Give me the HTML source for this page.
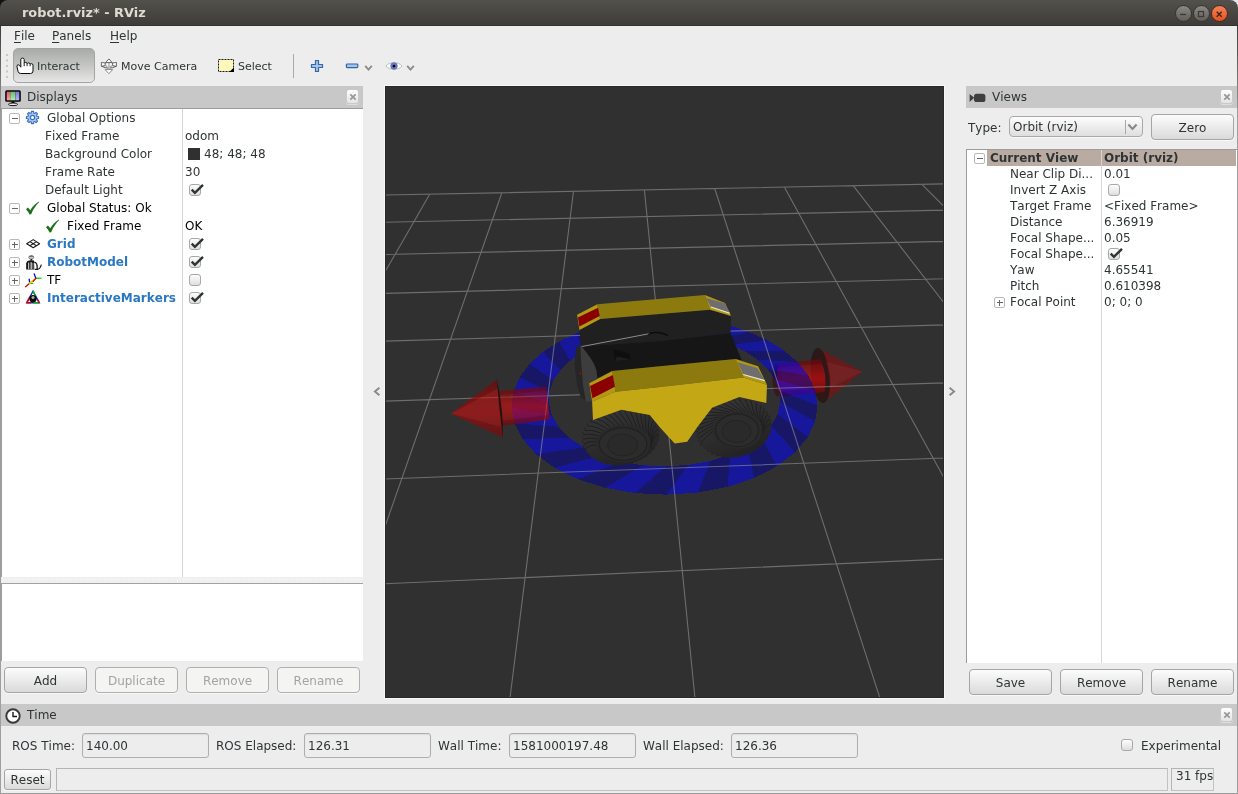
<!DOCTYPE html>
<html><head><meta charset="utf-8"><title>robot.rviz* - RViz</title>
<style>
*{box-sizing:border-box;margin:0;padding:0}
html,body{width:1238px;height:794px;overflow:hidden;background:#ededed}
body{position:relative;font-family:"DejaVu Sans","Liberation Sans",sans-serif;font-size:12px;color:#2e3436;line-height:14px;font-kerning:none}
.a{position:absolute;white-space:nowrap}
.t{position:absolute;white-space:nowrap;height:14px;line-height:14px}
.b{font-weight:bold}
.blue{color:#2a78c4;font-weight:bold}
.s11{font-size:11px}
#title{left:0;top:0;width:1238px;height:26px;background:linear-gradient(#52514c,#3d3c38);border-top-left-radius:8px;border-top-right-radius:8px;border-bottom:1px solid #32312e}
#titletxt{left:22px;top:5px;font-size:12.900px;font-kerning:normal;font-weight:bold;color:#dfdbd2;line-height:16px}
.wb{position:absolute;top:5.300px;width:16.500px;height:16.500px;border-radius:8.500px;border:1px solid #36352f;background:linear-gradient(#8a8983,#5f5e58)}
.wb.close{background:linear-gradient(#f38359,#e2531d);border-color:#4a2a1c}
.hdr{position:absolute;background:#c8c8c8;height:22px}
.hclose{position:absolute;width:13px;height:15px;border-radius:3px;border:1px solid #c9c9c9;background:linear-gradient(#fefefe,#e4e4e4);box-shadow:0 1px 0 #dedede}
.btn{position:absolute;height:26px;border:1px solid #a5a5a5;border-radius:4px;background:linear-gradient(#fcfcfc,#dadada);text-align:center;line-height:24px;padding-top:1px;color:#2e3436;box-shadow:0 1px 0 #f8f8f8}
.btn.dis{color:#a3a3a3;background:#f4f4f3;border-color:#adb0ad}
.field{position:absolute;height:25px;border:1px solid #aeaeae;border-radius:3px;background:#ededed;line-height:24px;padding-left:3px;box-shadow:inset 0 1px 1px #dcdcdc}
.cb{position:absolute;width:12px;height:12px;border:1px solid #a8a8a8;border-radius:3px;background:linear-gradient(#fdfdfd,#dedede)}
.exp{position:absolute;width:11px;height:11px;border:1px solid #bab9b3;border-radius:2px;background:#fff}
.exp:before{content:"";position:absolute;left:1.500px;top:4px;width:6px;height:1px;background:#666}
.exp.plus:after{content:"";position:absolute;left:4px;top:1.500px;width:1px;height:6px;background:#666}
svg{position:absolute;overflow:visible}
#root{position:absolute;left:0;top:0;width:1238px;height:794px;will-change:transform}
u{text-decoration:underline;text-underline-offset:2px;text-decoration-thickness:1px}
</style></head><body><div id="root">
<!-- TITLE BAR -->
<div class="a" style="left:0;top:0;width:10px;height:10px;background:#111"></div>
<div class="a" style="right:0;top:0;width:10px;height:10px;background:#e8e8e8"></div>
<div class="a" id="title"></div>
<div class="a" id="titletxt">robot.rviz* - RViz</div>
<div class="wb" style="left:1175.300px"></div>
<div class="wb" style="left:1193.200px"></div>
<div class="wb close" style="left:1211.200px"></div>
<svg style="left:1175.300px;top:5.600px" width="54" height="16">
<path d="M5 8.5h6" stroke="#3a3935" stroke-width="1.3" fill="none"/>
<rect x="23.5" y="5.5" width="5" height="5" stroke="#3a3935" stroke-width="1.2" fill="none"/>
<path d="M41.7 5.7l5 5M46.7 5.7l-5 5" stroke="#3a2218" stroke-width="1.3" fill="none"/>
</svg>
<!-- window borders -->
<div class="a" style="left:0;top:26px;width:1px;height:768px;background:linear-gradient(#3c3b37,#9e9e9e 90px,#9e9e9e);z-index:5"></div>
<div class="a" style="left:1237px;top:26px;width:1px;height:768px;background:linear-gradient(#3c3b37,#9e9e9e 90px,#9e9e9e);z-index:5"></div>
<div class="a" style="left:0;top:793px;width:1238px;height:1px;background:#9e9e9e;z-index:5"></div>
<!-- MENU -->
<div class="t" style="left:14px;top:29px"><u>F</u>ile</div>
<div class="t" style="left:52px;top:29px"><u>P</u>anels</div>
<div class="t" style="left:110px;top:29px"><u>H</u>elp</div>
<!--TOOLBAR-->
<svg style="left:6px;top:54px" width="3" height="25"><g fill="#c9c9bd"><rect x="0" y="0" width="2" height="2"/><rect x="0" y="5.5" width="2" height="2"/><rect x="0" y="11" width="2" height="2"/><rect x="0" y="16.5" width="2" height="2"/><rect x="0" y="22" width="2" height="2"/></g></svg>
<div class="a" style="left:13px;top:48px;width:82px;height:35px;border:1px solid #a3a5a2;border-radius:5px;background:linear-gradient(#a8aba7,#c4c6c3 50%,#e6e6e6)"></div>
<!-- hand icon -->
<svg style="left:16px;top:57px" width="18" height="18" viewBox="16 57 18 18">
<path d="M20.800 67.200V59.600Q20.800 58.100 22.500 58.100Q24.200 58.100 24.200 59.600V63.200Q24.300 62.400 25.600 62.400Q27 62.400 27.100 63.600Q27.300 62.900 28.600 62.900Q30 62.900 30.100 64.200Q30.300 63.700 31.500 63.700Q33 63.700 33 65.200V71Q33 73.500 30.500 73.500H20.700Q18.700 73.500 18.100 71.500L17 66.700Q16.700 64.800 18.200 64.800Q19.600 64.800 20.800 67.200z" fill="#fff" stroke="#000" stroke-width="0.950" stroke-linejoin="round"/>
<path d="M24.200 63.200V66.200M27.100 63.600V66.200M30.100 64.200V66.200" stroke="#000" stroke-width="0.900" fill="none"/>
</svg>
<div class="t s11" style="left:37px;top:60px">Interact</div>
<!-- move camera icon -->
<svg style="left:100px;top:58px" width="18" height="17" viewBox="100 58 18 17">
<path d="M101.500 66.200Q108.900 70.200 116.300 66.200" fill="none" stroke="#4a4a4a" stroke-width="0.900"/>
<ellipse cx="108.900" cy="64.400" rx="4.500" ry="2.100" fill="#f4f4f4" stroke="#555" stroke-width="0.800" stroke-dasharray="1.500 0.800"/>
<path d="M101.400 62.400L105.200 63V65.600L101.400 66.300z" fill="#fff" stroke="#4a4a4a" stroke-width="0.800" stroke-linejoin="round"/>
<path d="M116.400 62.400L112.600 63V65.600L116.400 66.300z" fill="#fff" stroke="#4a4a4a" stroke-width="0.800" stroke-linejoin="round"/>
<rect x="108.100" y="62.300" width="1.700" height="7.500" fill="#bdbdbd"/>
<path d="M108.900 58.900L112.200 62.600H105.600z" fill="#fff" stroke="#555" stroke-width="0.900" stroke-linejoin="round"/>
<path d="M108.900 73.700L112.700 69.600H105.100z" fill="#fff" stroke="#8a8a8a" stroke-width="1" stroke-linejoin="round"/>
</svg>
<div class="t s11" style="left:121px;top:60px">Move Camera</div>
<!-- select icon -->
<svg style="left:218px;top:59px" width="16" height="13" viewBox="0 0 16 13">
<rect x="0.5" y="0.5" width="15" height="12" fill="#fcf7bd" stroke="#000" stroke-width="0.900" stroke-dasharray="2 1"/>
<path d="M16 8.600V13H11.200z" fill="#000"/>
</svg>
<div class="t s11" style="left:238px;top:60px">Select</div>
<div class="a" style="left:293px;top:54px;width:1px;height:24px;background:#a9a9a9"></div>
<!-- plus / minus / eye -->
<svg style="left:310px;top:59px" width="14" height="14" viewBox="0 0 14 14">
<path d="M5.500 1.500h3v4h4v3h-4v4h-3v-4h-4v-3h4z" fill="#a5c4ea" stroke="#3465a4" stroke-width="1.200" stroke-linejoin="round"/></svg>
<svg style="left:345px;top:63px" width="14" height="6" viewBox="0 0 14 6">
<rect x="1.400" y="1" width="11.400" height="3.600" rx="0.800" fill="#a5c4ea" stroke="#3465a4" stroke-width="1.200"/></svg>
<svg style="left:364px;top:64px" width="9" height="8" viewBox="0 0 9 8"><path d="M1.200 1.800L4.500 5.600 7.800 1.800" fill="none" stroke="#8a8c87" stroke-width="1.800"/></svg>
<svg style="left:385px;top:60px" width="18" height="12" viewBox="0 0 18 12">
<path d="M1 6C4 1.600 14 1.600 17 6C14 10.400 4 10.400 1 6z" fill="#fff" stroke="#b9b9b9" stroke-width="1"/>
<circle cx="9" cy="6" r="3.300" fill="#6f86d0" stroke="#4a5fae" stroke-width="0.700"/>
<circle cx="9" cy="6" r="1.500" fill="#000"/>
</svg>
<svg style="left:406px;top:64px" width="9" height="8" viewBox="0 0 9 8"><path d="M1.200 1.800L4.500 5.600 7.800 1.800" fill="none" stroke="#8a8c87" stroke-width="1.800"/></svg>
<!--DISPLAYS-->
<div class="hdr" style="left:1px;top:86px;width:362px"></div>
<svg style="left:5px;top:90px" width="16" height="16" viewBox="0 0 16 16">
<defs><linearGradient id="mr" x1="0" y1="0" x2="0" y2="1"><stop offset="0" stop-color="#c06a6a"/><stop offset="1" stop-color="#f5a3a3"/></linearGradient>
<linearGradient id="mg" x1="0" y1="0" x2="0" y2="1"><stop offset="0" stop-color="#6cbc6c"/><stop offset="1" stop-color="#a5f5a5"/></linearGradient>
<linearGradient id="mb" x1="0" y1="0" x2="0" y2="1"><stop offset="0" stop-color="#7c7cd0"/><stop offset="1" stop-color="#b3b3ff"/></linearGradient></defs>
<rect x="0.200" y="0.200" width="15.600" height="11.600" rx="1.500" fill="#000"/>
<rect x="1.700" y="1.700" width="4.200" height="8.600" fill="url(#mr)"/><rect x="5.900" y="1.700" width="4.500" height="8.600" fill="url(#mg)"/><rect x="10.400" y="1.700" width="3.900" height="8.600" fill="url(#mb)"/>
<path d="M6.800 11.500h2.400l.5 1.800h-3.400z" fill="#000"/>
<ellipse cx="8" cy="14.300" rx="4.600" ry="1.300" fill="#f4f4f4" stroke="#000" stroke-width="0.9"/>
</svg>
<div class="t" style="left:27px;top:90px">Displays</div>
<div class="hclose" style="left:346px;top:89px"></div>
<svg style="left:349px;top:93px" width="8" height="8" viewBox="0 0 8 8"><path d="M1.300 1.300l5.400 5.400M6.700 1.300l-5.400 5.400" stroke="#979797" stroke-width="1.700" fill="none"/></svg>
<div class="a" style="left:0;top:108px;width:363px;height:469px;background:#fff;border-left:2px solid #9e9e9e;border-top:1px solid #9c9c9c"></div>
<div class="a" style="left:182px;top:109px;width:1px;height:468px;background:#d4d4d4"></div>
<div class="exp" style="left:9px;top:113px"></div>
<svg style="left:25px;top:110px" width="15" height="15" viewBox="0 0 15 15"><path d="M6.45 1.39L8.55 1.39L8.73 3.07L9.77 3.50L11.08 2.44L12.56 3.92L11.50 5.23L11.93 6.27L13.61 6.45L13.61 8.55L11.93 8.73L11.50 9.77L12.56 11.08L11.08 12.56L9.77 11.50L8.73 11.93L8.55 13.61L6.45 13.61L6.27 11.93L5.23 11.50L3.92 12.56L2.44 11.08L3.50 9.77L3.07 8.73L1.39 8.55L1.39 6.45L3.07 6.27L3.50 5.23L2.44 3.92L3.92 2.44L5.23 3.50L6.27 3.07z" fill="#a9c6ec" stroke="#3a6fbf" stroke-width="1.100" stroke-linejoin="round"/><circle cx="7.500" cy="7.500" r="2.100" fill="#fff" stroke="#3a6fbf" stroke-width="1.200"/></svg>
<div class="t " style="left:47px;top:111px">Global Options</div>
<div class="t " style="left:45px;top:129px">Fixed Frame</div>
<div class="t " style="left:185px;top:129px">odom</div>
<div class="t " style="left:45px;top:147px">Background Color</div>
<div class="a" style="left:188px;top:148px;width:12px;height:12px;background:#303030"></div>
<div class="t " style="left:204px;top:147px">48; 48; 48</div>
<div class="t " style="left:45px;top:165px">Frame Rate</div>
<div class="t " style="left:185px;top:165px">30</div>
<div class="t " style="left:45px;top:183px">Default Light</div>
<div class="cb" style="left:189px;top:184px"></div>
<svg style="left:189px;top:183px" width="16" height="14" viewBox="0 0 16 14"><path d="M2.700 6.700L5.900 9.900 14 1.800" fill="none" stroke="#2e3436" stroke-width="2.400"/></svg>
<div class="exp" style="left:9px;top:203px"></div>
<svg style="left:25px;top:201px" width="15" height="14" viewBox="0 0 15 14"><path d="M1 8.200L2.900 6.400 5.300 9.300C7.500 5.600 10.500 2.500 13.800 0.600L14.200 1.100C11 4.200 8.200 8.300 6.200 13.200L4.600 13.400C3.700 11.500 2.500 9.700 1 8.200z" fill="#1c701c"/></svg>
<div class="t " style="left:47px;top:201px;color:#000">Global Status: Ok</div>
<svg style="left:45px;top:219px" width="15" height="14" viewBox="0 0 15 14"><path d="M1 8.200L2.900 6.400 5.300 9.300C7.500 5.600 10.500 2.500 13.800 0.600L14.200 1.100C11 4.200 8.200 8.300 6.200 13.200L4.600 13.400C3.700 11.500 2.500 9.700 1 8.200z" fill="#1c701c"/></svg>
<div class="t " style="left:67px;top:219px;color:#000">Fixed Frame</div>
<div class="t " style="left:185px;top:219px;color:#000">OK</div>
<div class="exp plus" style="left:9px;top:239px"></div>
<svg style="left:26px;top:239px" width="15" height="10" viewBox="0 0 15 10"><path d="M7.200 0.600L13.600 4.700 7.200 8.800 0.700 4.700zM3.950 2.650L10.400 6.750M10.400 2.650L3.950 6.750" fill="#fff" stroke="#1a1a1a" stroke-width="1.100" stroke-linejoin="round"/></svg>
<div class="t blue" style="left:47px;top:237px">Grid</div>
<div class="cb" style="left:189px;top:238px"></div>
<svg style="left:189px;top:237px" width="16" height="14" viewBox="0 0 16 14"><path d="M2.700 6.700L5.900 9.900 14 1.800" fill="none" stroke="#2e3436" stroke-width="2.400"/></svg>
<div class="exp plus" style="left:9px;top:257px"></div>
<svg style="left:25px;top:255px" width="17" height="16" viewBox="0 0 17 16">
<ellipse cx="6.300" cy="2.300" rx="2.500" ry="1.700" fill="#f0f0f0" stroke="#222" stroke-width="0.600"/><path d="M3.900 1.700Q6.300 -0.300 8.700 1.700z" fill="#2d4fa8"/><rect x="4.300" y="2.400" width="4" height="0.800" fill="#c9b458"/>
<rect x="5.500" y="4" width="1.700" height="1.500" fill="#1a1a1a"/>
<path d="M2.200 6.200Q5 4.800 9 5.600L9.300 14.600H1.200V8.200z" fill="#151515"/>
<rect x="3.200" y="7.600" width="1" height="6.500" fill="#e8e8e8"/><rect x="5.600" y="7.200" width="1.100" height="6.900" fill="#f4f4f4"/><rect x="7.600" y="7.800" width="0.700" height="6" fill="#bbb"/>
<path d="M9.200 7.200c2.600 0.100 3.200 2.600 3 7.200h-2.400" fill="none" stroke="#151515" stroke-width="1.300"/>
<path d="M12.200 14.200c2 0.400 3.200-1.600 4.200-4.600" fill="none" stroke="#151515" stroke-width="1.200"/>
</svg>
<div class="t blue" style="left:47px;top:255px">RobotModel</div>
<div class="cb" style="left:189px;top:256px"></div>
<svg style="left:189px;top:255px" width="16" height="14" viewBox="0 0 16 14"><path d="M2.700 6.700L5.900 9.900 14 1.800" fill="none" stroke="#2e3436" stroke-width="2.400"/></svg>
<div class="exp plus" style="left:9px;top:275px"></div>
<svg style="left:25px;top:273px" width="17" height="15" viewBox="0 0 17 15" fill="none" stroke-width="1.300" stroke-linecap="round">
<path d="M4.700 10.200L0.600 13.700" stroke="#e00000"/><path d="M4.700 10.200L4.200 6.200" stroke="#0000e0"/><path d="M4.700 10.200L7.700 10.300" stroke="#00c800"/>
<path d="M4.700 10.200L10.800 5.300" stroke="#e8d000" stroke-width="1.500"/>
<path d="M10.800 5.300L9.200 0.900" stroke="#0000e0"/><path d="M10.800 5.300L16 5.200" stroke="#00d000"/><path d="M10.800 5.300L8.200 8.400" stroke="#e00000"/>
</svg>
<div class="t " style="left:47px;top:273px;color:#000">TF</div>
<div class="cb" style="left:189px;top:274px"></div>
<div class="exp plus" style="left:9px;top:293px"></div>
<svg style="left:25px;top:290px" width="16" height="15" viewBox="0 0 16 15">
<path d="M8 1.200L14.300 12.800H1.700z" fill="none" stroke="#2020e0" stroke-width="1.400"/>
<path d="M8 1.200L11.200 7" stroke="#00c000" stroke-width="1.400"/><path d="M1.700 12.800L4.800 7" stroke="#e00000" stroke-width="1.400"/><path d="M14.300 12.800H8" stroke="#00c000" stroke-width="1.400"/><path d="M1.700 12.800H6" stroke="#e00000" stroke-width="1.400"/><path d="M14.300 12.800L12.500 9.500" stroke="#e00000" stroke-width="1.400"/>
<circle cx="8" cy="8.800" r="3.700" fill="#0c0c0c"/><circle cx="8" cy="7.400" r="1.500" fill="#a8a8a8"/>
</svg>
<div class="t blue" style="left:47px;top:291px">InteractiveMarkers</div>
<div class="cb" style="left:189px;top:292px"></div>
<svg style="left:189px;top:291px" width="16" height="14" viewBox="0 0 16 14"><path d="M2.700 6.700L5.900 9.900 14 1.800" fill="none" stroke="#2e3436" stroke-width="2.400"/></svg>
<div class="a" style="left:1px;top:577px;width:362px;height:6px;background:#ededed"></div>
<svg style="left:1px;top:577px" width="362" height="6"><defs><pattern id="dots" width="6" height="6" patternUnits="userSpaceOnUse"><path d="M0.500 1h1v1h-1zM1.500 2h1v1h-1zM2.500 3h1v1h-1zM3.500 1h1v1h-1zM4.500 2h1v1h-1zM5.500 3h1v1h-1zM1.500 4.500h1v1h-1zM4.500 4.500h1v1h-1z" fill="#fbfbfb"/></pattern></defs><rect width="362" height="6" fill="url(#dots)"/></svg>
<div class="a" style="left:0;top:583px;width:363px;height:78px;background:#fff;border-left:2px solid #9e9e9e;border-top:1px solid #a2a2a2"></div>
<div class="btn" style="left:4px;top:667px;width:83px">Add</div>
<div class="btn dis" style="left:95px;top:667px;width:83px">Duplicate</div>
<div class="btn dis" style="left:186px;top:667px;width:83px">Remove</div>
<div class="btn dis" style="left:277px;top:667px;width:83px">Rename</div>
<!--VIEWPORT-->
<svg style="left:373px;top:386px" width="8" height="11" viewBox="0 0 8 11"><path d="M6.400 1.700L1.900 5.500 6.400 9.300" fill="none" stroke="#888a85" stroke-width="1.900"/></svg>
<svg style="left:947.800px;top:386px" width="8" height="11" viewBox="0 0 8 11"><path d="M1.600 1.700L6.100 5.500 1.600 9.300" fill="none" stroke="#888a85" stroke-width="1.900"/></svg>
<div class="a" style="left:384px;top:85px;width:561px;height:614px;border:1px solid #f7f7f7"></div>
<svg style="left:385px;top:86px;overflow:hidden" width="559" height="612" viewBox="385 86 559 612">
<rect x="385" y="86" width="559" height="612" fill="#303030"/>
<defs>
<linearGradient id="sh" x1="0" y1="0" x2="0" y2="1"><stop offset="0" stop-color="#8e0808"/><stop offset="0.18" stop-color="#a80a0a"/><stop offset="0.5" stop-color="#ee0a0a"/><stop offset="0.8" stop-color="#c00a0a"/><stop offset="1" stop-color="#8e0808"/></linearGradient>
<linearGradient id="cn" x1="0" y1="0" x2="0" y2="1"><stop offset="0" stop-color="#980808"/><stop offset="0.3" stop-color="#d80c0c"/><stop offset="0.6" stop-color="#e00c0c"/><stop offset="1" stop-color="#a80808"/></linearGradient>
</defs>

<g>
<ellipse cx="777.100" cy="380.300" rx="4.800" ry="16.200" transform="rotate(-3 777.1 380.3)" fill="#3a0c0c" fill-opacity="0.6"/>
<ellipse cx="820.400" cy="375.500" rx="9.600" ry="27.600" transform="rotate(-6 820.4 375.5)" fill="#2c0a0a" fill-opacity="0.62"/>
<polygon points="862.5,371.5 822.9,350.6 826.0,360.0 829.5,376.0 829.8,390.0 828.0,399.8" fill="#d01010" fill-opacity="0.42"/>
<polygon points="862.5,371.5 822.9,350.6 826.5,362.0" fill="#300000" fill-opacity="0.2"/>
<polygon points="862.5,371.5 828.0,399.8 829.8,388.0" fill="#300000" fill-opacity="0.18"/>
<path d="M778.100 363.700L820.400 359.200Q828 375 824.400 391.900L780.100 396.400Q775.500 380 778.100 363.700z" fill="url(#sh)" fill-opacity="0.56"/>
<polygon points="778.1,363.7 820.4,359.2 822.0,363.5 777.8,368.0" fill="#400000" fill-opacity="0.25"/>
<polygon points="779.3,392.0 825.2,387.2 824.4,391.9 780.1,396.4" fill="#400000" fill-opacity="0.22"/>
</g>

<g shape-rendering="crispEdges"><path d="M663.4 332.7L681.2 333.4L707.8 320.7L685.7 317.9zM698.6 335.7L715.3 339.5L749.3 332.0L729.2 325.4zM730.9 344.8L745.1 351.5L784.2 350.5L767.8 340.4zM757.4 359.6L767.5 368.9L808.4 375.6L797.9 362.4zM774.9 379.2L779.3 390.4L817.6 405.6L815.1 390.1zM780.3 402.0L777.7 413.9L807.8 437.2L815.2 421.4zM771.3 425.5L761.1 436.5L777.0 466.2L795.0 452.4zM747.3 446.3L730.2 454.6L727.5 486.9L754.3 477.9zM710.4 460.9L688.7 464.9L666.4 494.7L697.7 492.6zM665.9 466.4L643.0 465.3L605.0 487.8L635.0 493.1zM621.1 461.5L601.0 455.5L554.5 467.7L577.8 479.1zM583.6 447.4L569.3 437.7L522.5 439.1L535.9 454.1zM558.7 426.8L551.9 415.3L511.4 407.4L514.4 423.3zM548.8 403.4L549.4 391.7L519.6 377.3L513.3 392.0zM553.4 380.5L560.5 370.1L543.0 351.9L529.6 363.9zM570.3 360.7L582.3 352.4L577.4 332.9L559.1 341.5zM596.3 345.5L611.8 340.0L618.6 321.2L597.4 326.1zM628.4 336.1L645.7 333.6L663.1 317.1L640.7 318.2z" fill="#0000ff" fill-opacity="0.52"/><path d="M645.7 333.6L663.4 332.7L685.7 317.9L663.1 317.1zM681.2 333.4L698.6 335.7L729.2 325.4L707.8 320.7zM715.3 339.5L730.9 344.8L767.8 340.4L749.3 332.0zM745.1 351.5L757.4 359.6L797.9 362.4L784.2 350.5zM767.5 368.9L774.9 379.2L815.1 390.1L808.4 375.6zM779.3 390.4L780.3 402.0L815.2 421.4L817.6 405.6zM777.7 413.9L771.3 425.5L795.0 452.4L807.8 437.2zM761.1 436.5L747.3 446.3L754.3 477.9L777.0 466.2zM730.2 454.6L710.4 460.9L697.7 492.6L727.5 486.9zM688.7 464.9L665.9 466.4L635.0 493.1L666.4 494.7zM643.0 465.3L621.1 461.5L577.8 479.1L605.0 487.8zM601.0 455.5L583.6 447.4L535.9 454.1L554.5 467.7zM569.3 437.7L558.7 426.8L514.4 423.3L522.5 439.1zM551.9 415.3L548.8 403.4L513.3 392.0L511.4 407.4zM549.4 391.7L553.4 380.5L529.6 363.9L519.6 377.3zM560.5 370.1L570.3 360.7L559.1 341.5L543.0 351.9zM582.3 352.4L596.3 345.5L597.4 326.1L577.4 332.9zM611.8 340.0L628.4 336.1L640.7 318.2L618.6 321.2z" fill="#000096" fill-opacity="0.52"/></g>

<path d="M-1035.6 1484.4L283.3 197.1M-1035.6 1484.4L2216.3 1185.5M-645.1 1448.5L356.8 195.6M-564.6 1024.7L1822.4 863.6M-271.7 1414.2L429.7 194.2M-302.9 769.2L1583.9 668.7M85.8 1381.3L501.9 192.7M-136.4 606.7L1424.0 538.0M428.3 1349.8L573.5 191.3M-21.1 494.2L1309.3 444.2M756.8 1319.6L644.4 189.9M63.5 411.7L1223.0 373.7M1072.1 1290.6L714.7 188.5M128.1 348.5L1155.8 318.8M1375.0 1262.8L784.3 187.1M179.2 298.7L1101.9 274.7M1666.3 1236.0L853.4 185.8M220.5 258.4L1057.7 238.7M1946.5 1210.3L921.9 184.4M254.6 225.1L1020.9 208.5M2216.3 1185.5L989.7 183.0M283.3 197.1L989.7 183.0" stroke="#a0a0a4" stroke-opacity="0.55" stroke-width="1.100" fill="none"/>
<g>
<polygon points="576.0,348.0 581.0,344.0 584.0,360.0 585.0,400.0 581.0,398.0 577.0,385.0 574.5,365.0" fill="#262626" />
<polygon points="579.5,330.0 600.1,319.1 710.1,309.8 731.1,315.9 730.5,333.2 660.0,340.9 581.2,346.6" fill="#202020" />
<polygon points="581.2,346.6 660.0,340.9 730.5,333.2 741.8,360.2 735.9,359.0 660.0,366.3 612.3,371.1 597.3,378.0 584.0,352.0" fill="#161616" />
<polygon points="613.5,348.9 629.6,353.7 630.4,359.4 615.1,361.0" fill="#0f0f0f" />
<polygon points="615.1,361.0 630.4,359.4 617.0,356.5" fill="#1f1f1f" />
<path d="M581.5 346.600L649.800 333.600" stroke="#8c8c8c" stroke-width="1" fill="none"/>
<path d="M648 334.500C653 331.500 660 331.800 668 335.500" stroke="#0a0a0a" stroke-width="1.200" fill="none"/>
<path d="M580.300 344.800L584.400 349.700C590 357 595 364 596.500 370.700L597.300 378 589.200 383.200 592.100 401.400 586 401.400 583 385 581 360z" fill="#3d3d3d"/>
<circle cx="580.300" cy="373.500" r="0.900" fill="#c00000"/>
<polygon points="597.3,304.2 704.8,295.1 710.1,309.8 600.1,319.1" fill="#8c7a0f" />
<polygon points="577.1,314.7 597.3,304.2 600.1,319.1 579.5,330.0" fill="#b39812" />
<polygon points="577.9,317.5 598.0,307.8 599.7,315.9 579.4,326.6" fill="#8a0000" />
<polygon points="704.8,295.1 725.0,302.9 731.1,315.9 710.1,309.8" fill="#b39812" />
<polygon points="706.0,298.1 724.6,303.3 729.9,312.6 710.9,307.0" fill="#6e6e6e" />
<path d="M710.900 307L729.700 313.200" stroke="#e6e6e6" stroke-width="1.100" fill="none"/>
<g>
<linearGradient id="wg1" x1="0.3" y1="0" x2="0.600" y2="1"><stop offset="0" stop-color="#353535"/><stop offset="0.55" stop-color="#2c2c2c"/><stop offset="1" stop-color="#222"/></linearGradient>
<ellipse cx="620.8" cy="436.5" rx="38.5" ry="28.5" transform="rotate(-8.0 620.8 436.5)" fill="url(#wg1)"/>
<circle cx="658.9" cy="431.1" r="0.900" fill="#262626"/>
<circle cx="659.1" cy="435.6" r="0.900" fill="#262626"/>
<circle cx="658.3" cy="440.1" r="0.900" fill="#262626"/>
<circle cx="656.6" cy="444.5" r="0.900" fill="#262626"/>
<circle cx="654.0" cy="448.8" r="0.900" fill="#262626"/>
<circle cx="650.6" cy="452.7" r="0.900" fill="#262626"/>
<circle cx="646.4" cy="456.2" r="0.900" fill="#262626"/>
<circle cx="641.6" cy="459.2" r="0.900" fill="#262626"/>
<circle cx="636.4" cy="461.7" r="0.900" fill="#262626"/>
<circle cx="630.7" cy="463.5" r="0.900" fill="#262626"/>
<circle cx="624.8" cy="464.7" r="0.900" fill="#262626"/>
<circle cx="618.8" cy="465.2" r="0.900" fill="#262626"/>
<circle cx="612.8" cy="465.0" r="0.900" fill="#262626"/>
<circle cx="607.0" cy="464.1" r="0.900" fill="#262626"/>
<circle cx="601.6" cy="462.5" r="0.900" fill="#262626"/>
<circle cx="596.6" cy="460.2" r="0.900" fill="#262626"/>
<circle cx="592.3" cy="457.4" r="0.900" fill="#262626"/>
<circle cx="588.6" cy="454.1" r="0.900" fill="#262626"/>
<circle cx="585.8" cy="450.3" r="0.900" fill="#262626"/>
<circle cx="583.8" cy="446.2" r="0.900" fill="#262626"/>
<circle cx="582.7" cy="441.9" r="0.900" fill="#262626"/>
<circle cx="582.5" cy="437.4" r="0.900" fill="#262626"/>
<circle cx="583.3" cy="432.9" r="0.900" fill="#262626"/>
<circle cx="585.0" cy="428.5" r="0.900" fill="#262626"/>
<circle cx="587.6" cy="424.2" r="0.900" fill="#262626"/>
<circle cx="591.0" cy="420.3" r="0.900" fill="#262626"/>
<circle cx="595.2" cy="416.8" r="0.900" fill="#262626"/>
<circle cx="600.0" cy="413.8" r="0.900" fill="#262626"/>
<circle cx="605.2" cy="411.3" r="0.900" fill="#262626"/>
<circle cx="610.9" cy="409.5" r="0.900" fill="#262626"/>
<circle cx="616.8" cy="408.3" r="0.900" fill="#262626"/>
<circle cx="622.8" cy="407.8" r="0.900" fill="#262626"/>
<circle cx="628.8" cy="408.0" r="0.900" fill="#262626"/>
<circle cx="634.6" cy="408.9" r="0.900" fill="#262626"/>
<circle cx="640.0" cy="410.5" r="0.900" fill="#262626"/>
<circle cx="645.0" cy="412.8" r="0.900" fill="#262626"/>
<circle cx="649.3" cy="415.6" r="0.900" fill="#262626"/>
<circle cx="653.0" cy="418.9" r="0.900" fill="#262626"/>
<circle cx="655.8" cy="422.7" r="0.900" fill="#262626"/>
<circle cx="657.8" cy="426.8" r="0.900" fill="#262626"/>
<ellipse cx="623.5" cy="443.5" rx="27.3" ry="18.8" fill="#2a2a2a"/>
<path d="M585.4 448.9Q589.7 444.8 596.3 445.0M583.6 444.5Q588.8 440.9 596.3 441.9M582.9 439.8Q588.7 436.9 597.0 438.9M583.2 435.1Q589.5 432.9 598.5 435.9M584.5 430.5Q591.1 429.1 600.7 433.2M586.9 426.0Q593.6 425.4 603.5 430.7M590.1 421.7Q596.8 422.0 606.8 428.6M594.2 417.9Q600.7 419.0 610.6 426.9M599.1 414.6Q605.1 416.5 614.8 425.7M604.5 411.9Q609.9 414.5 619.1 424.9M610.4 409.9Q615.1 413.2 623.6 424.7M616.5 408.6Q620.4 412.5 628.2 425.0M622.8 408.1Q625.7 412.4 632.5 425.8M629.1 408.3Q630.9 413.0 636.7 427.0M635.1 409.3Q635.8 414.3 640.4 428.7M640.7 411.1Q640.3 416.1 643.7 430.9M645.7 413.6Q644.3 418.6 646.5 433.3M650.1 416.7Q647.6 421.5 648.6 436.1M653.7 420.3Q650.2 424.8 650.0 439.1M656.4 424.4Q651.9 428.4 650.7 442.1M658.1 428.8Q652.9 432.3 650.7 445.2M658.7 433.4Q652.9 436.3 649.9 448.3" stroke="#1d1d1d" stroke-width="0.900" fill="none"/>
<ellipse cx="623.0" cy="444.0" rx="23.8" ry="16.3" fill="#2c2c2c" stroke="#212121" stroke-width="1.200"/>
<ellipse cx="622.6" cy="445.0" rx="15.0" ry="11.0" fill="#2a2a2a" stroke="#232323" stroke-width="0.900"/>
</g>
<g>
<linearGradient id="wg2" x1="0.3" y1="0" x2="0.600" y2="1"><stop offset="0" stop-color="#353535"/><stop offset="0.55" stop-color="#2c2c2c"/><stop offset="1" stop-color="#222"/></linearGradient>
<ellipse cx="734.0" cy="428.5" rx="37.5" ry="28.5" transform="rotate(-12.0 734.0 428.5)" fill="url(#wg2)"/>
<circle cx="770.7" cy="420.7" r="0.900" fill="#262626"/>
<circle cx="771.2" cy="425.2" r="0.900" fill="#262626"/>
<circle cx="770.7" cy="429.7" r="0.900" fill="#262626"/>
<circle cx="769.4" cy="434.2" r="0.900" fill="#262626"/>
<circle cx="767.2" cy="438.6" r="0.900" fill="#262626"/>
<circle cx="764.1" cy="442.7" r="0.900" fill="#262626"/>
<circle cx="760.4" cy="446.5" r="0.900" fill="#262626"/>
<circle cx="755.9" cy="449.8" r="0.900" fill="#262626"/>
<circle cx="751.0" cy="452.6" r="0.900" fill="#262626"/>
<circle cx="745.6" cy="454.8" r="0.900" fill="#262626"/>
<circle cx="739.9" cy="456.4" r="0.900" fill="#262626"/>
<circle cx="734.1" cy="457.3" r="0.900" fill="#262626"/>
<circle cx="728.3" cy="457.4" r="0.900" fill="#262626"/>
<circle cx="722.6" cy="456.9" r="0.900" fill="#262626"/>
<circle cx="717.2" cy="455.6" r="0.900" fill="#262626"/>
<circle cx="712.3" cy="453.7" r="0.900" fill="#262626"/>
<circle cx="707.8" cy="451.2" r="0.900" fill="#262626"/>
<circle cx="704.0" cy="448.1" r="0.900" fill="#262626"/>
<circle cx="700.9" cy="444.5" r="0.900" fill="#262626"/>
<circle cx="698.7" cy="440.6" r="0.900" fill="#262626"/>
<circle cx="697.3" cy="436.3" r="0.900" fill="#262626"/>
<circle cx="696.8" cy="431.8" r="0.900" fill="#262626"/>
<circle cx="697.3" cy="427.3" r="0.900" fill="#262626"/>
<circle cx="698.6" cy="422.8" r="0.900" fill="#262626"/>
<circle cx="700.8" cy="418.4" r="0.900" fill="#262626"/>
<circle cx="703.9" cy="414.3" r="0.900" fill="#262626"/>
<circle cx="707.6" cy="410.5" r="0.900" fill="#262626"/>
<circle cx="712.1" cy="407.2" r="0.900" fill="#262626"/>
<circle cx="717.0" cy="404.4" r="0.900" fill="#262626"/>
<circle cx="722.4" cy="402.2" r="0.900" fill="#262626"/>
<circle cx="728.1" cy="400.6" r="0.900" fill="#262626"/>
<circle cx="733.9" cy="399.7" r="0.900" fill="#262626"/>
<circle cx="739.7" cy="399.6" r="0.900" fill="#262626"/>
<circle cx="745.4" cy="400.1" r="0.900" fill="#262626"/>
<circle cx="750.8" cy="401.4" r="0.900" fill="#262626"/>
<circle cx="755.7" cy="403.3" r="0.900" fill="#262626"/>
<circle cx="760.2" cy="405.8" r="0.900" fill="#262626"/>
<circle cx="764.0" cy="408.9" r="0.900" fill="#262626"/>
<circle cx="767.1" cy="412.5" r="0.900" fill="#262626"/>
<circle cx="769.3" cy="416.4" r="0.900" fill="#262626"/>
<ellipse cx="737.5" cy="429.8" rx="25.0" ry="18.9" fill="#2a2a2a"/>
<path d="M700.4 443.1Q704.4 438.7 712.6 431.3M698.4 438.8Q703.2 435.0 712.6 428.2M697.4 434.3Q702.8 431.0 713.3 425.1M697.3 429.6Q703.3 427.0 714.6 422.2M698.3 424.8Q704.6 423.0 716.6 419.4M700.2 420.2Q706.7 419.2 719.2 417.0M703.1 415.8Q709.6 415.6 722.2 414.8M706.8 411.7Q713.1 412.4 725.7 413.1M711.3 408.1Q717.3 409.6 729.5 411.9M716.3 405.1Q721.8 407.3 733.5 411.1M721.9 402.7Q726.7 405.6 737.6 410.9M727.8 401.0Q731.9 404.6 741.8 411.2M733.9 400.0Q737.0 404.2 745.8 412.0M740.0 399.9Q742.1 404.5 749.5 413.2M745.9 400.5Q747.0 405.4 753.0 415.0M751.5 401.9Q751.5 407.0 756.0 417.1M756.6 404.0Q755.5 409.1 758.5 419.6M761.0 406.8Q758.9 411.8 760.5 422.4M764.8 410.2Q761.7 414.9 761.8 425.3M767.7 414.1Q763.7 418.5 762.4 428.4M769.7 418.4Q764.9 422.2 762.4 431.6M770.7 423.0Q765.2 426.2 761.7 434.6" stroke="#1d1d1d" stroke-width="0.900" fill="none"/>
<ellipse cx="737.0" cy="430.3" rx="21.5" ry="16.4" fill="#2c2c2c" stroke="#212121" stroke-width="1.200"/>
<ellipse cx="736.5" cy="431.5" rx="14.5" ry="11.0" fill="#2a2a2a" stroke="#232323" stroke-width="0.900"/>
</g>
<polygon points="612.3,371.1 660.0,366.3 735.7,359.0 743.5,377.5 660.0,386.9 615.5,391.7" fill="#8c7a0f" />
<polygon points="589.2,383.2 612.3,371.1 615.5,391.7 592.1,401.4" fill="#b39812" />
<polygon points="590.0,386.0 612.8,374.9 614.9,386.8 592.5,398.2" fill="#8a0000" />
<polygon points="735.5,359.0 758.1,366.3 767.0,384.8 743.5,377.5" fill="#b39812" />
<polygon points="737.5,362.2 757.3,367.9 764.6,380.4 743.2,374.3" fill="#6e6e6e" />
<path d="M743.200 374.500L764.600 380.600" stroke="#e6e6e6" stroke-width="1.100" fill="none"/>
<polygon points="592.1,401.4 615.5,391.7 660.0,386.9 743.5,377.5 767.0,384.8 766.3,403.1 739.3,396.9 712.1,407.7 697.4,426.9 687.2,441.7 674.7,443.4 660.0,427.5 649.7,415.1 621.4,409.8 593.0,420.0" fill="#c4a714" />
</g>

<g>
<polygon points="497.9,391.2 546.2,386.6 549.8,419.4 500.9,425.9" fill="url(#sh)" fill-opacity="0.55"/>
<polygon points="497.9,391.2 546.2,386.6 546.7,390.5 498.3,395.2" fill="#500000" fill-opacity="0.25"/>
<polygon points="500.5,421.3 549.3,414.7 549.8,419.4 500.9,425.9" fill="#500000" fill-opacity="0.25"/>
<polygon points="451.2,413.5 496.9,379.6 502.9,437.5" fill="url(#cn)" fill-opacity="0.52"/>
<polygon points="451.2,413.5 496.9,379.6 497.8,388.5" fill="#400000" fill-opacity="0.28"/>
<polygon points="451.2,413.5 502.9,437.5 501.6,427.0" fill="#400000" fill-opacity="0.22"/>
<path d="M496.900 379.600Q503.500 409 502.900 437.500Q498.800 409 496.900 379.600z" fill="#151010" fill-opacity="0.85"/>
</g>

<rect x="385.500" y="86.500" width="558" height="611" fill="none" stroke="#292929" stroke-width="1"/>
</svg>
<!--VIEWS-->
<div class="hdr" style="left:966px;top:86px;width:271px"></div>
<svg style="left:969px;top:93px" width="17" height="10" viewBox="0 0 17 10"><path d="M0.600 0.900L5.300 4.800 0.600 8.900z" fill="#3f3f3f"/><rect x="5" y="0.700" width="11.400" height="8.300" rx="2.600" fill="#3f3f3f"/></svg>
<div class="t" style="left:992px;top:90px">Views</div>
<div class="hclose" style="left:1220px;top:89px"></div>
<svg style="left:1223px;top:93px" width="8" height="8" viewBox="0 0 8 8"><path d="M1.300 1.300l5.400 5.400M6.700 1.300l-5.400 5.400" stroke="#979797" stroke-width="1.700" fill="none"/></svg>
<div class="t" style="left:968px;top:121px">Type:</div>
<div class="a" style="left:1009px;top:116px;width:134px;height:21px;border:1px solid #a9a9a9;border-radius:4px;background:linear-gradient(#fdfdfd,#dedede);box-shadow:0 1px 0 #f8f8f8"></div>
<div class="t" style="left:1013px;top:120px">Orbit (rviz)</div>
<div class="a" style="left:1125px;top:120px;width:1px;height:14px;background:#a8a8a8"></div>
<svg style="left:1127px;top:123px" width="11" height="8" viewBox="0 0 11 8"><path d="M1.400 1.500L5.500 6 9.600 1.500" fill="none" stroke="#888a85" stroke-width="2.100"/></svg>
<div class="btn" style="left:1151px;top:114px;width:83px">Zero</div>
<div class="a" style="left:966px;top:149px;width:271px;height:514px;background:#fff;border:1px solid #9c9c9c;border-bottom:none;border-right:none"></div>
<div class="a" style="left:987px;top:150px;width:249px;height:16px;background:#b9aba1"></div>
<div class="a" style="left:1101px;top:150px;width:1px;height:513px;background:#d4d4d4"></div>
<div class="exp" style="left:974px;top:153px"></div>
<div class="t b" style="left:990px;top:151px">Current View</div>
<div class="t b" style="left:1104px;top:151px">Orbit (rviz)</div>
<div class="t " style="left:1010px;top:167px">Near Clip Di...</div>
<div class="t " style="left:1104px;top:167px">0.01</div>
<div class="t " style="left:1010px;top:183px">Invert Z Axis</div>
<div class="cb" style="left:1108px;top:184px"></div>
<div class="t " style="left:1010px;top:199px">Target Frame</div>
<div class="t " style="left:1104px;top:199px">&lt;Fixed Frame&gt;</div>
<div class="t " style="left:1010px;top:215px">Distance</div>
<div class="t " style="left:1104px;top:215px">6.36919</div>
<div class="t " style="left:1010px;top:231px">Focal Shape...</div>
<div class="t " style="left:1104px;top:231px">0.05</div>
<div class="t " style="left:1010px;top:247px">Focal Shape...</div>
<div class="cb" style="left:1108px;top:248px"></div>
<svg style="left:1108px;top:247px" width="16" height="14" viewBox="0 0 16 14"><path d="M2.700 6.700L5.900 9.900 14 1.800" fill="none" stroke="#2e3436" stroke-width="2.400"/></svg>
<div class="t " style="left:1010px;top:263px">Yaw</div>
<div class="t " style="left:1104px;top:263px">4.65541</div>
<div class="t " style="left:1010px;top:279px">Pitch</div>
<div class="t " style="left:1104px;top:279px">0.610398</div>
<div class="t " style="left:1010px;top:295px">Focal Point</div>
<div class="t " style="left:1104px;top:295px">0; 0; 0</div>
<div class="exp plus" style="left:994px;top:297px"></div>
<div class="btn" style="left:969px;top:669px;width:83px">Save</div>
<div class="btn" style="left:1060px;top:669px;width:83px">Remove</div>
<div class="btn" style="left:1151px;top:669px;width:83px">Rename</div>
<!--TIME-->
<div class="hdr" style="left:1px;top:704px;width:1236px"></div>
<svg style="left:5px;top:708px" width="16" height="16" viewBox="0 0 16 16"><circle cx="8" cy="8" r="6.700" fill="#fff" stroke="#383838" stroke-width="1.900"/><path d="M8 4v4.500h4" fill="none" stroke="#1a1a1a" stroke-width="1.400"/></svg>
<div class="t" style="left:27px;top:708px">Time</div>
<div class="hclose" style="left:1220px;top:707px"></div>
<svg style="left:1223px;top:711px" width="8" height="8" viewBox="0 0 8 8"><path d="M1.300 1.300l5.400 5.400M6.700 1.300l-5.400 5.400" stroke="#979797" stroke-width="1.700" fill="none"/></svg>
<div class="t" style="left:12px;top:739px">ROS Time:</div>
<div class="field" style="left:82px;top:733px;width:127px">140.00</div>
<div class="t" style="left:216px;top:739px">ROS Elapsed:</div>
<div class="field" style="left:304px;top:733px;width:127px">126.31</div>
<div class="t" style="left:438px;top:739px">Wall Time:</div>
<div class="field" style="left:509px;top:733px;width:127px">1581000197.48</div>
<div class="t" style="left:643px;top:739px">Wall Elapsed:</div>
<div class="field" style="left:731px;top:733px;width:127px">126.36</div>
<div class="cb" style="left:1121px;top:739px"></div>
<div class="t" style="left:1141px;top:739px">Experimental</div>
<div class="btn" style="left:4px;top:769px;width:47px;height:21px;line-height:19px;border-radius:3px">Reset</div>
<div class="a" style="left:56px;top:768px;width:1112px;height:23px;border:1px solid #c2c2c2;border-top-color:#b4b4b4;border-left-color:#b4b4b4;background:#ededed"></div>
<div class="a" style="left:1171px;top:768px;width:43px;height:23px;border:1px solid #c2c2c2;border-top-color:#b4b4b4;border-left-color:#b4b4b4;background:#ededed"></div>
<div class="t" style="left:1176px;top:769px">31 fps</div>
</div></body></html>
